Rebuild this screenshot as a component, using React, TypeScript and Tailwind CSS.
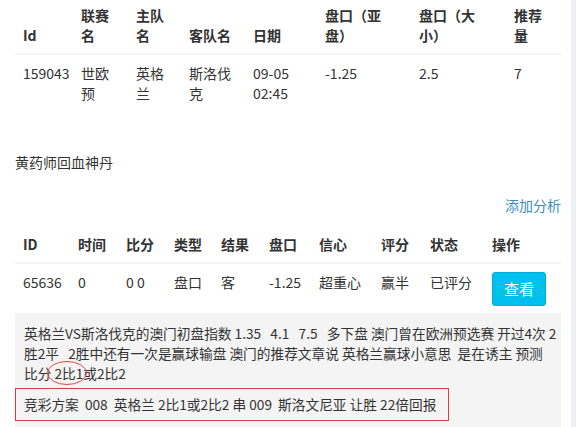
import React from "react";

const t1Cols = [58, 55, 53, 64, 72, 94, 95, 55];
const t1Head: React.ReactNode[] = [
  "Id",
  "联赛名",
  "主队名",
  "客队名",
  "日期",
  <>
    盘口（亚
    <br />
    盘）
  </>,
  <>
    盘口（大
    <br />
    小）
  </>,
  "推荐量",
];
const t1Row = ["159043", "世欧预", "英格兰", "斯洛伐克", "09-05 02:45", "-1.25", "2.5", "7"];

const t2Cols = [55, 48, 48, 47, 48, 50, 62, 49, 62, 77];
const t2Head = ["ID", "时间", "比分", "类型", "结果", "盘口", "信心", "评分", "状态", "操作"];
const t2Row = ["65636", "0", "0 0", "盘口", "客", "-1.25", "超重心", "赢半", "已评分"];

export default function App() {
  return (
    <div className="flex w-[576px] min-h-[427px] h-[427px] overflow-hidden bg-white text-[14px] leading-[20px] text-[#333] font-['Noto_Sans_CJK_SC','Liberation_Sans',sans-serif]">
      <div className="w-[571px] pl-[15px] pr-[10px]">
        <table className="w-[546px] table-fixed border-collapse">
          <colgroup>
            {t1Cols.map((w, i) => (
              <col key={i} style={{ width: w }} />
            ))}
          </colgroup>
          <thead>
            <tr>
              {t1Head.map((h, i) => (
                <th
                  key={i}
                  className="px-[8px] pt-[5px] pb-[8px] text-left align-bottom font-bold border-b-2 border-[#f4f4f4]"
                >
                  {h}
                </th>
              ))}
            </tr>
          </thead>
          <tbody>
            <tr>
              {t1Row.map((c, i) => (
                <td key={i} className="px-[8px] py-[8px] align-top">
                  {c}
                </td>
              ))}
            </tr>
          </tbody>
        </table>

        <div className="mt-[41px]">黄药师回血神丹</div>
        <div className="mt-[23px] flex justify-end">
          <span className="text-[#3c8dbc]">添加分析</span>
        </div>

        <table className="mt-[11px] w-[546px] table-fixed border-collapse">
          <colgroup>
            {t2Cols.map((w, i) => (
              <col key={i} style={{ width: w }} />
            ))}
          </colgroup>
          <thead>
            <tr>
              {t2Head.map((h, i) => (
                <th
                  key={i}
                  className="px-[8px] py-[8px] text-left align-bottom font-bold border-b-2 border-[#f4f4f4]"
                >
                  {h}
                </th>
              ))}
            </tr>
          </thead>
          <tbody>
            <tr>
              {t2Row.map((c, i) => (
                <td key={i} className="px-[8px] py-[8px] align-top whitespace-pre">
                  {c}
                </td>
              ))}
              <td className="px-[8px] py-[8px] align-top">
                <button className="h-[34px] w-[54px] rounded-[3px] border border-[#00acd6] bg-[#00c0ef] text-[15px] text-white">
                  查看
                </button>
              </td>
            </tr>
          </tbody>
        </table>

        <div className="relative -mt-[1px] bg-[#f4f4f4] pt-[10px] pb-[10px] text-[13.7px]">
          <p className="px-[9px] whitespace-pre">
            {"英格兰VS斯洛伐克的澳门初盘指数 1.35   4.1   7.5   多下盘 澳门曾在欧洲预选赛 开过4次 2"}
            <br />
            {"胜2平   2胜中还有一次是赢球输盘 澳门的推荐文章说 英格兰赢球小意思  是在诱主 预测"}
            <br />
            {"比分 2比1或2比2"}
          </p>
          <svg
            className="absolute left-[31px] top-[47px]"
            width="42"
            height="26"
            viewBox="0 0 42 26"
          >
            <ellipse cx="21" cy="13" rx="19.5" ry="11.5" fill="none" stroke="#e64545" strokeWidth="1" />
          </svg>
          <div className="mt-[5px] w-[434px] border border-[#e53935] px-[8px] pt-[5px] pb-[6px] whitespace-pre">
            {"竞彩方案  008  英格兰 2比1或2比2 串 009  斯洛文尼亚 让胜 22倍回报"}
          </div>
        </div>
      </div>
      <div className="w-[5px] bg-[#ecf0f5]" />
    </div>
  );
}
